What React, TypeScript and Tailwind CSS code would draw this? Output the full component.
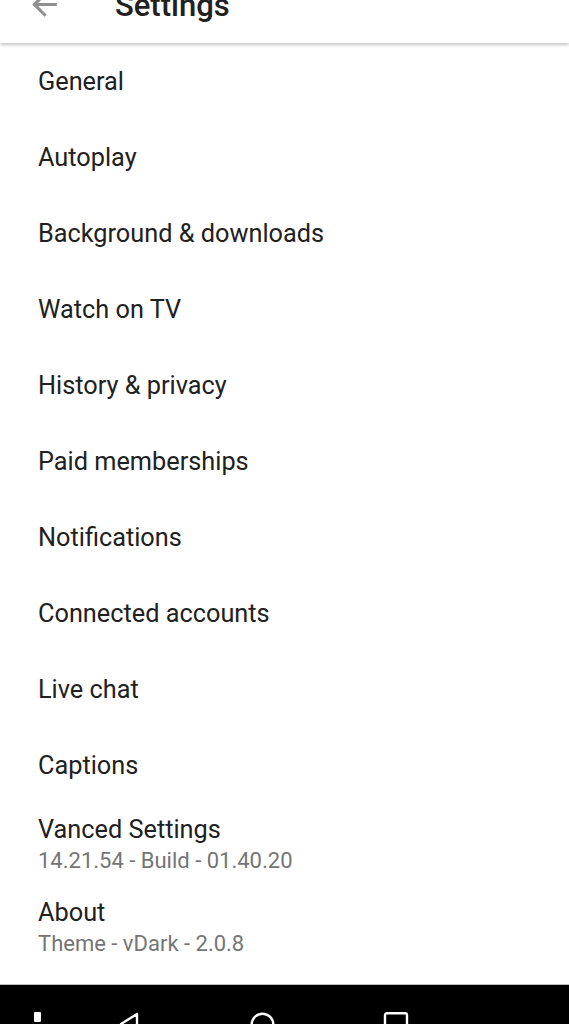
const items = [
  "General",
  "Autoplay",
  "Background & downloads",
  "Watch on TV",
  "History & privacy",
  "Paid memberships",
  "Notifications",
  "Connected accounts",
  "Live chat",
  "Captions",
]

const detailed = [
  { title: "Vanced Settings", sub: "14.21.54 - Build - 01.40.20" },
  { title: "About", sub: "Theme - vDark - 2.0.8" },
]

export default function App() {
  return (
    <div
      className="h-[1024px] w-[569px] overflow-hidden bg-white flex flex-col"
      style={{ fontFamily: "Roboto, 'Noto Sans', sans-serif" }}
    >
      {/* Toolbar, scrolled partly out of view */}
      <div className="-mt-[14px] h-[57px] shrink-0 flex items-center bg-white shadow-[0_2px_3px_rgba(0,0,0,0.22)] relative z-10">
        <svg className="ml-[26px] mb-[21px] shrink-0" width="37" height="37" viewBox="0 0 24 24" fill="#8f8f8f">
          <path d="M20 11H7.83l5.59-5.59L12 4l-8 8 8 8 1.41-1.41L7.83 13H20v-2z" />
        </svg>
        <span className="ml-[52px] mb-[16px] text-[31px] font-medium text-[#212121]">Settings</span>
      </div>

      {/* Settings list */}
      <div className="flex-1 flex flex-col">
        {items.map((label) => (
          <div key={label} className="h-[76px] shrink-0 flex items-center px-[38px] pt-[2px]">
            <span className="text-[25.3px] text-[#212121]">{label}</span>
          </div>
        ))}
        {detailed.map((row) => (
          <div key={row.title} className="h-[83px] shrink-0 flex flex-col justify-center px-[38px]">
            <span className="text-[25.3px] leading-[31px] text-[#212121]">{row.title}</span>
            <span className="text-[22px] leading-[31px] text-[#757575]">{row.sub}</span>
          </div>
        ))}
      </div>

      {/* Android navigation bar */}
      <div className="h-[40px] shrink-0 bg-black border-t border-[#bdbdbd] relative">
        <div className="absolute left-0 top-[27px] flex items-start">
          <div className="ml-[34px] w-[7px] h-[10px] bg-white rounded-[1px]" />
          <svg className="ml-[77px]" width="24" height="24" viewBox="0 0 24 24" fill="none">
            <path d="M19 2 L3 12 L19 22 Z" stroke="white" strokeWidth="2.4" strokeLinejoin="round" />
          </svg>
          <svg className="ml-[108px]" width="25" height="25" viewBox="0 0 25 25" fill="none">
            <circle cx="12.5" cy="12.5" r="10.8" stroke="white" strokeWidth="2.4" />
          </svg>
          <svg className="ml-[108px]" width="26" height="26" viewBox="0 0 26 26" fill="none">
            <rect x="2" y="1.2" width="22" height="22" rx="2" stroke="white" strokeWidth="2.4" />
          </svg>
        </div>
      </div>
    </div>
  )
}
